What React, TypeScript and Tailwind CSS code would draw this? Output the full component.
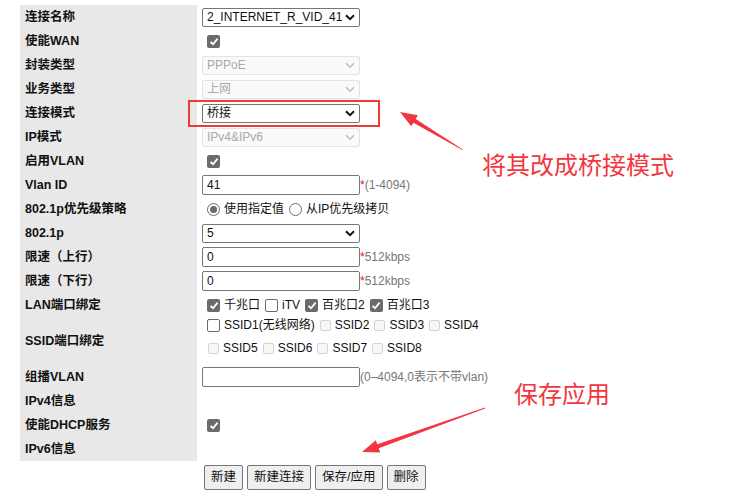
import React from "react";

const FONT = { fontFamily: '"Liberation Sans", Arial, "Noto Sans CJK SC", sans-serif' };

function Chevron({ disabled }: { disabled?: boolean }) {
  return (
    <svg width="10" height="7" viewBox="0 0 10 7" className="shrink-0">
      <path
        d="M1 1.2 L5 5.2 L9 1.2"
        fill="none"
        stroke={disabled ? "#b8b8b8" : "#111"}
        strokeWidth={disabled ? 1.3 : 2}
      />
    </svg>
  );
}

function Select({ value, disabled }: { value: string; disabled?: boolean }) {
  return (
    <div
      className={
        "flex h-[19px] w-[158px] items-center justify-between rounded-[2px] border pl-[4px] pr-[4px] text-[12px] leading-none " +
        (disabled ? "border-[#e3e3e3] bg-[#fafafa] text-[#a8a8a8]" : "border-[#767676] bg-white text-[#111]")
      }
    >
      <span>{value}</span>
      <Chevron disabled={disabled} />
    </div>
  );
}

function Check({ checked, disabled }: { checked?: boolean; disabled?: boolean }) {
  if (checked) {
    return (
      <span className="inline-flex h-[13px] w-[13px] shrink-0 items-center justify-center rounded-[2px] bg-[#6b6b6b]">
        <svg width="10" height="9" viewBox="0 0 10 9">
          <path d="M1.5 4.8 L4 7.2 L8.6 1.6" fill="none" stroke="white" strokeWidth="1.8" />
        </svg>
      </span>
    );
  }
  if (disabled) {
    return <span className="inline-block h-[11px] w-[11px] shrink-0 rounded-[2px] border border-[#d4d4d4] bg-[#f7f7f7]" />;
  }
  return <span className="inline-block h-[13px] w-[13px] shrink-0 rounded-[2px] border border-[#6b6b6b] bg-white" />;
}

function Radio({ checked }: { checked?: boolean }) {
  return (
    <span className="inline-flex h-[13px] w-[13px] shrink-0 items-center justify-center rounded-full border border-[#6b6b6b] bg-white">
      {checked && <span className="h-[7px] w-[7px] rounded-full bg-[#6b6b6b]" />}
    </span>
  );
}

function TextInput({ value }: { value: string }) {
  return (
    <div className="flex h-[20px] w-[158px] items-center rounded-[2px] border border-[#767676] bg-white pl-[4px] text-[12px] text-[#111]">
      {value}
    </div>
  );
}

function Hint({ children, star }: { children: React.ReactNode; star?: boolean }) {
  return (
    <span className="text-[12px] text-[#777]">
      {star && <span className="text-[#e02020]">*</span>}
      {children}
    </span>
  );
}

function arrowPoints(x1: number, y1: number, x2: number, y2: number) {
  const dx = x2 - x1;
  const dy = y2 - y1;
  const len = Math.hypot(dx, dy);
  const ux = dx / len;
  const uy = dy / len;
  const nx = -uy;
  const ny = ux;
  const L = 17;
  const bx = x2 - ux * L;
  const by = y2 - uy * L;
  const p = (x: number, y: number) => `${x.toFixed(1)},${y.toFixed(1)}`;
  return [
    p(x1 + nx * 0.4, y1 + ny * 0.4),
    p(bx + nx * 2.2, by + ny * 2.2),
    p(bx + nx * 6.5, by + ny * 6.5),
    p(x2, y2),
    p(bx - nx * 6.5, by - ny * 6.5),
    p(bx - nx * 2.2, by - ny * 2.2),
    p(x1 - nx * 0.4, y1 - ny * 0.4),
  ].join(" ");
}

const lone = (checked: boolean) => (
  <span className="ml-[5px] inline-flex">
    <Check checked={checked} />
  </span>
);

const rows: { label: string; h?: number; content: React.ReactNode }[] = [
  { label: "连接名称", content: <Select value="2_INTERNET_R_VID_41" /> },
  { label: "使能WAN", content: lone(true) },
  { label: "封装类型", content: <Select value="PPPoE" disabled /> },
  { label: "业务类型", content: <Select value="上网" disabled /> },
  { label: "连接模式", content: <Select value="桥接" /> },
  { label: "IP模式", content: <Select value="IPv4&IPv6" disabled /> },
  { label: "启用VLAN", content: lone(true) },
  {
    label: "Vlan ID",
    content: (
      <div className="flex items-center">
        <TextInput value="41" />
        <Hint star>(1-4094)</Hint>
      </div>
    ),
  },
  {
    label: "802.1p优先级策略",
    content: (
      <div className="flex items-center gap-[4px] pl-[5px] text-[12px] text-[#111]">
        <Radio checked />
        <span className="mr-[1px]">使用指定值</span>
        <Radio />
        <span>从IP优先级拷贝</span>
      </div>
    ),
  },
  { label: "802.1p", content: <Select value="5" /> },
  {
    label: "限速（上行）",
    content: (
      <div className="flex items-center">
        <TextInput value="0" />
        <Hint star>512kbps</Hint>
      </div>
    ),
  },
  {
    label: "限速（下行）",
    content: (
      <div className="flex items-center">
        <TextInput value="0" />
        <Hint star>512kbps</Hint>
      </div>
    ),
  },
  {
    label: "LAN端口绑定",
    content: (
      <div className="flex items-center gap-[4px] pl-[5px] text-[12px] text-[#111]">
        <Check checked />
        <span className="mr-[1px]">千兆口</span>
        <Check />
        <span className="mr-[1px]">iTV</span>
        <Check checked />
        <span className="mr-[1px]">百兆口2</span>
        <Check checked />
        <span>百兆口3</span>
      </div>
    ),
  },
  {
    label: "SSID端口绑定",
    h: 48,
    content: (
      <div className="flex h-full flex-col gap-[9px] pl-[5px] pt-[1px] text-[12px] text-[#111]">
        <div className="flex h-[14px] items-center gap-[4px]">
          <Check />
          <span className="mr-[1px]">SSID1(无线网络)</span>
          <Check disabled />
          <span className="mr-[1px]">SSID2</span>
          <Check disabled />
          <span className="mr-[1px]">SSID3</span>
          <Check disabled />
          <span>SSID4</span>
        </div>
        <div className="flex h-[14px] items-center gap-[4px]">
          <span className="ml-[1px] inline-flex">
            <Check disabled />
          </span>
          <span className="mr-[1px]">SSID5</span>
          <Check disabled />
          <span className="mr-[1px]">SSID6</span>
          <Check disabled />
          <span className="mr-[1px]">SSID7</span>
          <Check disabled />
          <span>SSID8</span>
        </div>
      </div>
    ),
  },
  {
    label: "组播VLAN",
    content: (
      <div className="flex items-center">
        <TextInput value="" />
        <Hint>(0–4094,0表示不带vlan)</Hint>
      </div>
    ),
  },
  { label: "IPv4信息", content: null },
  { label: "使能DHCP服务", content: lone(true) },
  { label: "IPv6信息", content: null },
];

function Btn({ children }: { children: React.ReactNode }) {
  return (
    <button className="h-[25px] rounded-[2px] border border-[#767676] bg-[#efefef] px-[6px] text-[12.5px] text-[#111]">
      {children}
    </button>
  );
}

export default function App() {
  return (
    <div className="relative h-[494px] w-[750px] overflow-hidden bg-white" style={FONT}>
      <div className="pl-[20px] pt-[5px]">
        <div className="grid w-[500px] grid-cols-[177px_1fr]">
          {rows.map((r) => (
            <React.Fragment key={r.label}>
              <div
                className={
                  "flex items-center bg-[#e8e8e8] pl-[5px] text-[12.5px] font-bold text-[#111] " +
                  (r.h ? "h-[48px]" : "h-[24px]")
                }
              >
                {r.label}
              </div>
              <div className={"flex items-center pl-[5px] " + (r.h ? "h-[48px]" : "h-[24px]")}>{r.content}</div>
            </React.Fragment>
          ))}
        </div>
        <div className="flex gap-[4px] pl-[184px] pt-[4px]">
          <Btn>新建</Btn>
          <Btn>新建连接</Btn>
          <Btn>保存/应用</Btn>
          <Btn>删除</Btn>
        </div>
      </div>

      {/* annotations */}
      <div className="absolute left-[188px] top-[100px] h-[27px] w-[192px] border-2 border-[#f03a3a]" />
      <div
        className="absolute left-[482px] top-[146px] text-[24px] leading-[36px] text-[#f2363f]"
        style={{ fontFamily: '"Noto Sans CJK SC", sans-serif' }}
      >
        将其改成桥接模式
      </div>
      <div
        className="absolute left-[514px] top-[375px] text-[24px] leading-[36px] text-[#f2363f]"
        style={{ fontFamily: '"Noto Sans CJK SC", sans-serif' }}
      >
        保存应用
      </div>
      <svg className="pointer-events-none absolute left-0 top-0" width="750" height="494">
        <polygon points={arrowPoints(463, 150, 400, 112)} fill="#f2363f" />
        <polygon points={arrowPoints(485, 408, 362, 452)} fill="#f2363f" />
      </svg>
    </div>
  );
}
